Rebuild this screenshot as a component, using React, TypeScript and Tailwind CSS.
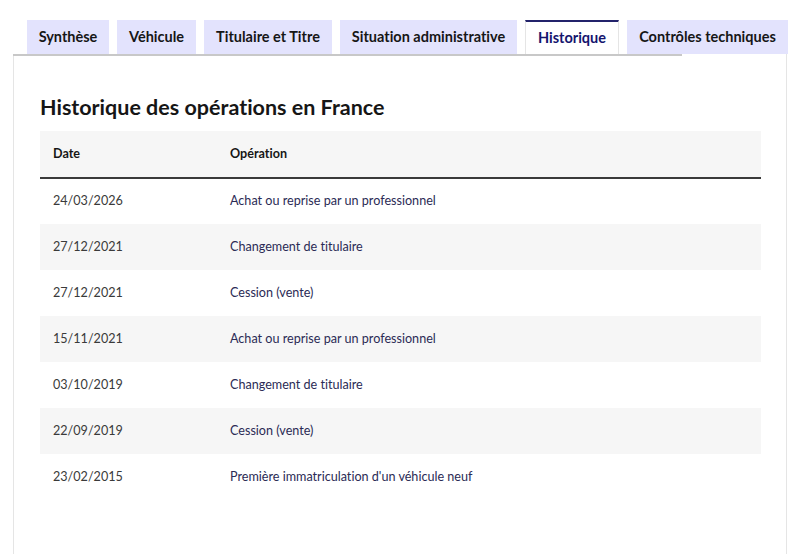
const tabs = [
  { label: "Synthèse", w: "w-[82px]" },
  { label: "Véhicule", w: "w-[79px]" },
  { label: "Titulaire et Titre", w: "w-[128px]" },
  { label: "Situation administrative", w: "w-[177px]" },
  { label: "Historique", w: "w-[94px]" },
  { label: "Contrôles techniques", w: "w-[161px]" },
];

const rows = [
  ["24/03/2026", "Achat ou reprise par un professionnel"],
  ["27/12/2021", "Changement de titulaire"],
  ["27/12/2021", "Cession (vente)"],
  ["15/11/2021", "Achat ou reprise par un professionnel"],
  ["03/10/2019", "Changement de titulaire"],
  ["22/09/2019", "Cession (vente)"],
  ["23/02/2015", "Première immatriculation d'un véhicule neuf"],
];

export default function App() {
  return (
    <div className="flex h-[554px] w-[800px] flex-col overflow-hidden bg-white pt-5 font-['Lato',sans-serif] text-[#161616] [font-variant-ligatures:none]">
      <div className="ml-[27px] flex gap-2">
        {tabs.map((t) =>
          t.label === "Historique" ? (
            <div
              key={t.label}
              className={`${t.w} flex h-[34px] shrink-0 items-center justify-center whitespace-nowrap border-x border-t-2 border-x-[#e5e5e5] border-t-[#23236b] bg-white text-[14.5px] font-bold text-[#14146e]`}
            >
              {t.label}
            </div>
          ) : (
            <div
              key={t.label}
              className={`${t.w} flex h-[34px] shrink-0 items-center justify-center whitespace-nowrap bg-[#e3e3fd] text-[14.5px] font-bold`}
            >
              {t.label}
            </div>
          )
        )}
      </div>
      <div className="ml-[13px] w-[774px] flex-1 border-x border-[#e5e5e5]">
        <div className="h-[2px] w-[669px] -translate-x-px bg-[#c8c8c8]" />
        <div className="px-[26px] pt-[37px]">
          <h2 className="text-[21.5px] font-bold leading-[28px]">
            Historique des opérations en France
          </h2>
          <table className="mt-[10px] w-[721px] text-[12.6px]">
            <thead>
              <tr className="h-[47px] border-b-2 border-[#3a3a3a] bg-[#f6f6f6] text-left">
                <th className="w-[177px] px-[13px] font-bold">Date</th>
                <th className="px-[13px] font-bold">Opération</th>
              </tr>
            </thead>
            <tbody>
              {rows.map(([d, op], i) => (
                <tr
                  key={i}
                  className={`h-[46px] ${i % 2 === 1 ? "bg-[#f6f6f6]" : "bg-white"}`}
                >
                  <td className="px-[13px] text-[#3a3a3a]">{d}</td>
                  <td className="px-[13px] text-[#2b2b55]">{op}</td>
                </tr>
              ))}
            </tbody>
          </table>
        </div>
      </div>
    </div>
  );
}
